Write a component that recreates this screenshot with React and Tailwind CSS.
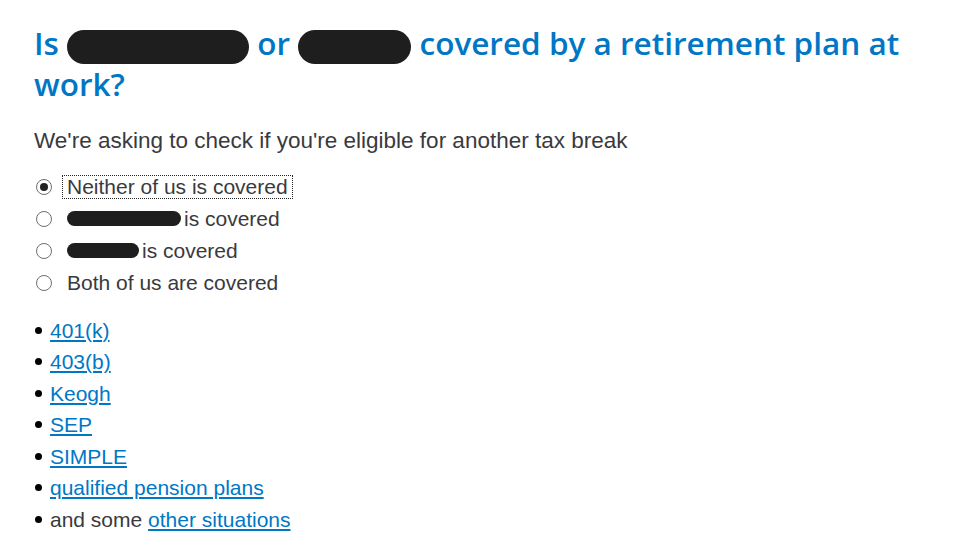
import React from "react";

const Blob = ({ w, h = 26, className = "" }) => (
  <span
    className={`inline-block align-middle bg-[#1e1e1e] rounded-full ${className}`}
    style={{ width: w, height: h }}
  />
);

const options = [
  { id: "none", label: "Neither of us is covered" },
  { id: "a", blob: 114, label: "is covered" },
  { id: "b", blob: 72, label: "is covered" },
  { id: "both", label: "Both of us are covered" },
];

const plans = ["401(k)", "403(b)", "Keogh", "SEP", "SIMPLE", "qualified pension plans"];

export default function App() {
  return (
    <div className="min-h-[552px] bg-white pl-[34px] pr-6 pt-[23px] font-['Liberation_Sans',Arial,sans-serif] text-[#393a3d]">
      <h1 className="font-['Open_Sans',sans-serif] font-semibold text-[31.5px] leading-[40px] text-[#0077c5] max-w-[900px]">
        Is <Blob w={182} h={34} /> or <Blob w={113} h={34} /> covered by a retirement plan at work?
      </h1>

      <p className="mt-[22px] text-[22.5px] leading-[30px]">
        We're asking to check if you're eligible for another tax break
      </p>

      <div className="mt-[15px] flex flex-col text-[21px]">
        {options.map((o, i) => (
          <label key={o.id} className="flex items-center h-[32px]">
            <span className="w-[16px] h-[16px] ml-[2px] rounded-full border border-[#707070] bg-white flex items-center justify-center shrink-0">
              {i === 0 && <span className="w-[8px] h-[8px] rounded-full bg-[#222]" />}
            </span>
            <span
              className={`ml-[11px] px-[4px] leading-[22px] ${
                i === 0 ? "outline outline-1 outline-dotted outline-[#222]" : ""
              }`}
            >
              {o.blob && <Blob w={o.blob} h={15} className="mr-[3px] -mt-[3px]" />}
              {o.label}
            </span>
          </label>
        ))}
      </div>

      <ul className="mt-[16px] flex flex-col text-[21px]">
        {plans.map((p) => (
          <li key={p} className="flex items-center h-[31.5px]">
            <span className="w-[7px] h-[7px] rounded-full bg-black ml-[1px] mr-[8px]" />
            <a href="#" className="text-[#0077c5] underline">
              {p}
            </a>
          </li>
        ))}
        <li className="flex items-center h-[31.5px]">
          <span className="w-[7px] h-[7px] rounded-full bg-black ml-[1px] mr-[8px]" />
          <span>
            and some{" "}
            <a href="#" className="text-[#0077c5] underline">
              other situations
            </a>
          </span>
        </li>
      </ul>
    </div>
  );
}
